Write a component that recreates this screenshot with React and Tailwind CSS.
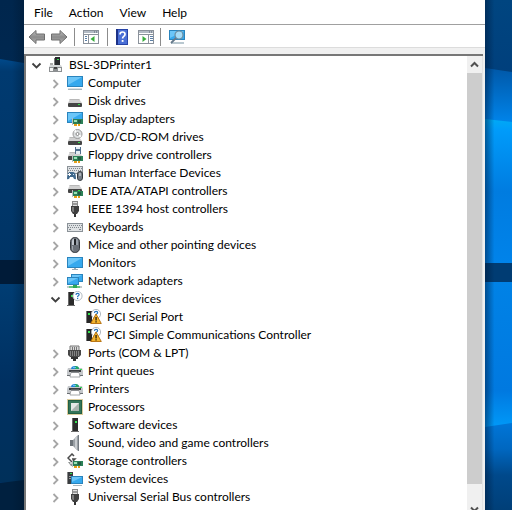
import React from "react";

const Icon = ({ children, className = "h-4 w-4" }) => (
  <svg viewBox="0 0 16 16" className={`${className} block shrink-0`} aria-hidden="true">
    {children}
  </svg>
);

const Screen = ({ x, y, w, h }) => (
  <g>
    <rect x={x} y={y} width={w} height={h} fill="#2a84bd" />
    <rect x={x + 1} y={y + 1} width={w - 2} height={h - 2} fill="#36a9ee" />
    <path d={`M${x + 1} ${y + 1}h${w - 2}L${x + 1} ${y + h - 2}z`} fill="#6cc6f8" />
  </g>
);

const Card = ({ x = 5, y = 8 }) => (
  <g>
    <rect x={x} y={y - 1} width="1" height="7" fill="#b9bdbd" />
    <rect x={x + 1} y={y} width="10" height="5" fill="#2c8058" />
    <rect x={x + 2} y={y + 1} width="3" height="2" fill="#9be0b4" />
    <rect x={x + 6} y={y + 1} width="3" height="3" fill="#235c43" />
    <rect x={x + 2} y={y + 5} width="3" height="2" fill="#e6a01a" />
    <rect x={x + 6} y={y + 5} width="2" height="2" fill="#e6a01a" />
  </g>
);

const Drive = ({ y = 6 }) => (
  <g>
    <path d={`M3 ${y}h9l3 4H1z`} fill="#d0d0d0" />
    <path d={`M3 ${y}h9l1 1H2z`} fill="#b8b8b8" />
    <rect x="1" y={y + 4} width="14" height="4" rx="1" fill="#454545" />
    <rect x="11" y={y + 5} width="2" height="1" fill="#37e34a" />
  </g>
);

const Tower = ({ x = 1 }) => (
  <g>
    <rect x={x} y="1" width="6" height="13" fill="#2b2b2b" />
    <rect x={x} y="1" width="1" height="13" fill="#686868" />
    <rect x={x + 3} y="4" width="2" height="2" fill="#35e550" />
    <rect x={x - 1} y="14" width="8" height="1" fill="#6d6d6d" />
  </g>
);

const Question = ({ cx = 10, cy = 5 }) => (
  <g>
    <circle cx={cx} cy={cy} r="4.6" fill="#fff" stroke="#a9b2ba" strokeWidth=".9" />
    <path
      d={`M${cx - 1.6} ${cy - 1.1}q.1-1.5 1.7-1.5t1.5 1.4q0 .8-1.4 1.5v.9`}
      fill="none"
      stroke="#2271bb"
      strokeWidth="1.2"
    />
    <rect x={cx - 0.5} y={cy + 2} width="1.2" height="1.1" fill="#2271bb" />
  </g>
);

const Keys = ({ y = 4, h = 9 }) => (
  <g>
    <rect x="0" y={y} width="16" height={h} fill="#8b9298" />
    <rect x="1" y={y + 1} width="14" height={h - 2} fill="#dfe2e4" />
    <path
      d={`M2 ${y + 2.5}h13M1 ${y + 4.5}h14`}
      stroke="#80878d"
      strokeWidth="1"
      strokeDasharray="1 1"
    />
    <path d={`M2 ${y + 6.5}h2M12 ${y + 6.5}h2`} stroke="#80878d" />
  </g>
);

const Plug = () => (
  <g>
    <rect x="5.5" y=".5" width="5" height="5" fill="#e0e0e0" stroke="#8a8a8a" />
    <path d="M6.5 2h1v2h-1zM8.5 2h1v2h-1z" fill="#555" />
    <path d="M4 5h8v5l-2 3H6l-2-3z" fill="#3f3f3f" />
    <path d="M5 6h2v5H6l-1-1z" fill="#7c7c7c" />
    <rect x="7" y="13" width="2" height="3" fill="#333" />
  </g>
);

const Printer = () => (
  <g>
    <path d="M4 6q0-3 4-3t4 3z" fill="#2584d8" />
    <path d="M8 3q4 0 4 3H8z" fill="#27a964" />
    <path d="M6 4h3v1H6z" fill="#69c7ee" />
    <path d="M1 5h3v1h8V5h3l1 3v5h-3V9H3v4H0V8z" fill="#c4c7ca" />
    <path d="M2 7h12v2H2z" fill="#3c3f42" />
    <path d="M0 12h3v1H0zM13 12h3v1h-3z" fill="#6a6e72" />
    <rect x="13" y="6" width="2" height="1" fill="#32df54" />
    <path d="M4 9h8l1 5H3z" fill="#fff" stroke="#8e9296" strokeWidth=".8" />
    <path d="M4 9h8v1H4z" fill="#8a8d90" />
  </g>
);

const Unknown = () => (
  <g>
    <rect x="1" y="2" width="5" height="12" fill="#262626" />
    <rect x="0" y="2" width="1" height="12" fill="#777" />
    <rect x="2" y="4" width="2" height="2" fill="#35e550" />
    <Question cx={10} cy={5} />
    <path d="M10 5 15.3 14.5H4.7z" fill="#f4b52e" stroke="#b26c08" strokeWidth=".9" strokeLinejoin="round" />
    <path d="M9.4 8h1.3v3.4H9.4zM9.4 12.2h1.3v1.3H9.4z" fill="#271b08" />
  </g>
);

const glyphs = {
  root: (
    <g>
      <path d="M7 0h5v8H7z" fill="#292b2e" />
      <path d="M6 1h1v7H6z" fill="#777" />
      <rect x="9" y="2" width="2" height="1" fill="#35e550" />
      <path d="M2 6h3v2H2z" fill="#aaa" />
      <path d="M2 8h11l1 2H1z" fill="#d4d6d7" />
      <path d="M1 10h13v5H1z" fill="#8c8f91" />
      <path d="M2 11h3v3H2zM10 11h3v3h-3z" fill="#f5f5f5" />
      <path d="M6 10h3v2H6z" fill="#444" />
    </g>
  ),
  computer: (
    <g>
      <Screen x={0} y={1} w={16} h={11} />
      <path d="M1 13h14v2H1z" fill="#a9b6bd" />
      <path d="M1 13h14v1H1z" fill="#dae2e6" />
    </g>
  ),
  disk: <Drive />,
  display: (
    <g>
      <Screen x={0} y={1} w={16} h={11} />
      <Card x={5} y={8} />
    </g>
  ),
  dvd: (
    <g>
      <Drive y={8} />
      <circle cx="10.5" cy="5" r="4.5" fill="#dcdfe0" stroke="#999" />
      <path d="M10.5 5 7 2.2l1.6-1.4zM10.5 5l4 1.8-1.4 1.8z" fill="#fff" />
      <circle cx="10.5" cy="5" r="1.5" fill="#fff" stroke="#888" />
    </g>
  ),
  floppy: (
    <g>
      <Drive y={5} />
      <path d="M8 0h6v7H8z" fill="#52708e" />
      <path d="M9 0h4v2H9zM9 4h4v3H9z" fill="#e4edf4" />
      <Card x={5} y={9} />
    </g>
  ),
  hid: (
    <g>
      <Keys y={1} h={8} />
      <path d="M0 14q0-7 3-7h3q3 0 3 7-2 1-3-2H3q-1 3-3 2z" fill="#41698c" />
      <path d="M2 8h1v3H2zM1 9h3v1H1z" fill="#fff" />
      <rect x="6" y="9" width="1" height="1" fill="#c9e4f8" />
      <rect x="10.5" y="6.5" width="5" height="9" rx="2.4" fill="#737b84" stroke="#33383d" />
      <path d="M12.5 8h1v3h-1z" fill="#e3e7ea" />
    </g>
  ),
  ide: (
    <g>
      <Drive y={2} />
      <Card x={5} y={8} />
    </g>
  ),
  plug: <Plug />,
  keyboard: <Keys />,
  mouse: (
    <g>
      <rect x="3.5" y=".5" width="9" height="15" rx="4.2" fill="#6a7078" stroke="#34383d" />
      <path d="M5 4q0-2.5 2-2.5V8H5z" fill="#c1c8d0" />
      <path d="M9 1.5q2 0 2 3V8H9z" fill="#98a0a9" />
      <rect x="7" y="2" width="2" height="6" fill="#202327" />
      <path d="M5 9h1v3q0 1.5 1 2-2 0-2-2z" fill="#a1a8af" />
    </g>
  ),
  monitor: (
    <g>
      <Screen x={0} y={2} w={16} h={11} />
      <path d="M7 13h2v1h2v1H5v-1h2z" fill="#9eabb3" />
    </g>
  ),
  network: (
    <g>
      <Screen x={4} y={1} w={12} h={8} />
      <Screen x={0} y={4} w={12} h={8} />
      <path d="M7 12h2v1h5v2H1v-2h6z" fill="#68c583" />
      <path d="M6 12h4v3H6z" fill="#2ea956" />
      <path d="M0 13h2v2H0zM13 13h2v2h-2z" fill="#c3cbcb" />
    </g>
  ),
  other: (
    <g>
      <Tower x={1} />
      <Question cx={10.5} cy={5} />
    </g>
  ),
  unknown: <Unknown />,
  port: (
    <g>
      <path d="M3 1h9v5H3z" fill="#dadada" stroke="#777" />
      <path d="M5.5 2v3M7.5 2v3M9.5 2v3" stroke="#777" />
      <path d="M1 5h13v5l-2 2H3l-2-2z" fill="#474747" />
      <path d="M3.5 6v5M5.5 6v5M7.5 6v5M9.5 6v5M11.5 6v5" stroke="#858585" />
      <path d="M4 12h2v2H4zM9 12h2v2H9zM6 12h3v4H6z" fill="#333" />
    </g>
  ),
  printer: <Printer />,
  cpu: (
    <g>
      <rect x=".5" y=".5" width="15" height="15" fill="none" stroke="#b99a3c" strokeDasharray="1 1" />
      <rect x="1" y="1" width="14" height="14" fill="#235f43" />
      <rect x="2" y="2" width="12" height="12" fill="#34755a" />
      <rect x="4" y="4" width="8" height="8" fill="#a9b4af" />
      <path d="M4 4h8l-8 8z" fill="#e4e8e6" />
    </g>
  ),
  software: <Tower x={5} />,
  sound: (
    <g>
      <path d="M3 5h3v6H3z" fill="#6d747a" />
      <path d="m6 5 5-5v16l-5-5z" fill="#9aa0a5" />
      <path d="m8 3 2-2v14l-2-2z" fill="#c8ccd0" />
      <path d="M11 0h1v16h-1z" fill="#747b82" />
    </g>
  ),
  storage: (
    <g>
      <path d="M7 3 5 1 1 5l4 4 3-3H5" fill="none" stroke="#4b4b4b" strokeWidth="1.5" />
      <path d="M1 9h8v4H4z" fill="#8e9393" />
      <path d="M3 9h4v2H3z" fill="#cfd2d2" />
      <Card x={5} y={8} />
    </g>
  ),
  system: (
    <g>
      <path d="M1 1h5v12H1z" fill="#3a3d40" />
      <path d="M0 1h1v12H0z" fill="#888" />
      <path d="M2 5h3v1H2zM2 7h3v1H2z" fill="#999" />
      <rect x="3" y="2" width="2" height="1" fill="#35e550" />
      <Screen x={4} y={5} w={12} h={8} />
      <path d="M6 14h9v1H6z" fill="#a9b6bd" />
    </g>
  ),
};

const categories = [
  ["Computer", "computer"],
  ["Disk drives", "disk"],
  ["Display adapters", "display"],
  ["DVD/CD-ROM drives", "dvd"],
  ["Floppy drive controllers", "floppy"],
  ["Human Interface Devices", "hid"],
  ["IDE ATA/ATAPI controllers", "ide"],
  ["IEEE 1394 host controllers", "plug"],
  ["Keyboards", "keyboard"],
  ["Mice and other pointing devices", "mouse"],
  ["Monitors", "monitor"],
  ["Network adapters", "network"],
  ["Other devices", "other", ["PCI Serial Port", "PCI Simple Communications Controller"]],
  ["Ports (COM & LPT)", "port"],
  ["Print queues", "printer"],
  ["Printers", "printer"],
  ["Processors", "cpu"],
  ["Software devices", "software"],
  ["Sound, video and game controllers", "sound"],
  ["Storage controllers", "storage"],
  ["System devices", "system"],
  ["Universal Serial Bus controllers", "plug"],
];

function Row({ label, icon, open, leaf }) {
  return (
    <div className="flex h-[18px] items-center whitespace-nowrap">
      {leaf ? (
        <span className="w-[22px] shrink-0" />
      ) : (
        <button
          type="button"
          aria-label={`${open ? "Collapse" : "Expand"} ${label}`}
          className="flex h-4 w-[22px] shrink-0 items-center pl-[5px]"
        >
          <svg viewBox="0 0 11 11" className="h-[11px] w-[11px]" fill="none" aria-hidden="true">
            {open ? (
              <path d="m1.5 3.5 4 4 4-4" stroke="#404040" strokeWidth="1.8" />
            ) : (
              <path d="m3.5 2 4 4-4 4" stroke="#a6a6a6" strokeWidth="1.8" />
            )}
          </svg>
        </button>
      )}
      <Icon>{glyphs[icon]}</Icon>
      <span className="pl-[5px]">{label}</span>
    </div>
  );
}

function Separator() {
  return <span className="h-[18px] w-px shrink-0 bg-[#8c8c8c]" />;
}

function Arrow({ flip }) {
  return (
    <svg viewBox="0 0 17 16" className={flip ? "h-4 w-[17px] -scale-x-100" : "h-4 w-[17px]"} aria-hidden="true">
      <defs>
        <linearGradient id={flip ? "fwd" : "back"} x1="0" y1="0" x2="0" y2="1">
          <stop offset="0" stopColor="#c2c2c2" />
          <stop offset=".5" stopColor="#8b8b8b" />
          <stop offset="1" stopColor="#b5b5b5" />
        </linearGradient>
      </defs>
      <path
        d="M1 8 8 1.5V5h8.5v6H8v3.5z"
        fill={flip ? "url(#fwd)" : "url(#back)"}
        stroke="#6e6e6e"
        strokeLinejoin="round"
      />
    </svg>
  );
}

function Pane({ right }) {
  return (
    <Icon>
      <rect x=".5" y="1.5" width="15" height="13" fill="#fff" stroke="#8b929b" />
      <path d="M1 2h14v2H1z" fill="#b3bbc5" />
      <path d="M11 2.5h1v1h-1zM13 2.5h1v1h-1z" fill="#55606e" />
      <path d="M1 5.5h14" stroke="#8b929b" />
      {right ? (
        <g>
          <path d="M10.5 6v8" stroke="#8b929b" />
          <path d="M12 7.5h3M12 9.5h3M12 11.5h3" stroke="#5b7fa6" />
          <path d="M4.5 7v6l4-3z" fill="#39ad3d" />
        </g>
      ) : (
        <g>
          <path d="M5.5 6v8" stroke="#8b929b" />
          <path d="M2 7.5h2M2 9.5h2M2 11.5h2" stroke="#5b7fa6" />
          <path d="M11.5 7v6l-4-3z" fill="#39ad3d" />
        </g>
      )}
    </Icon>
  );
}

function ToolButton({ label, children }) {
  return (
    <button type="button" aria-label={label} className="flex h-5 shrink-0 items-center">
      {children}
    </button>
  );
}

function LeftWallpaper() {
  return (
    <svg viewBox="0 0 24 510" preserveAspectRatio="none" className="block h-full w-6 shrink-0" aria-hidden="true">
      <defs>
        <linearGradient id="l1" x1="0" y1="0" x2="0" y2="1">
          <stop offset="0" stopColor="#00264d" />
          <stop offset="1" stopColor="#003263" />
        </linearGradient>
        <linearGradient id="l2" x1="0" y1="0" x2="0" y2="1">
          <stop offset="0" stopColor="#00498a" />
          <stop offset=".06" stopColor="#003a70" />
          <stop offset="1" stopColor="#003465" />
        </linearGradient>
        <linearGradient id="l3" x1="0" y1="0" x2="0" y2="1">
          <stop offset="0" stopColor="#003d73" />
          <stop offset=".5" stopColor="#003061" />
          <stop offset="1" stopColor="#00305a" />
        </linearGradient>
        <linearGradient id="lshade">
          <stop offset=".5" stopColor="#001020" stopOpacity="0" />
          <stop offset="1" stopColor="#001020" stopOpacity=".3" />
        </linearGradient>
      </defs>
      <path d="M0 0h24v510H0z" fill="url(#l1)" />
      <path d="M0 59l24 4v200H0z" fill="url(#l2)" />
      <path d="M0 260h24v24H0z" fill="#001b38" />
      <path d="M0 284h24v198H0z" fill="url(#l3)" />
      <path d="M0 483l24-3v30H0z" fill="#00203f" />
      <path d="M0 0h24v510H0z" fill="url(#lshade)" />
    </svg>
  );
}

function RightWallpaper() {
  return (
    <svg viewBox="0 0 27 510" preserveAspectRatio="none" className="block h-full w-[27px] shrink-0" aria-hidden="true">
      <defs>
        <linearGradient id="r1" x1="0" y1="0" x2="0" y2="1">
          <stop offset="0" stopColor="#004580" />
          <stop offset="1" stopColor="#003f7c" />
        </linearGradient>
        <linearGradient id="r2" x1="0" y1="0" x2="0" y2="1">
          <stop offset="0" stopColor="#0058a8" />
          <stop offset=".85" stopColor="#0084ea" />
          <stop offset="1" stopColor="#0084ea" />
        </linearGradient>
        <linearGradient id="r3" x1="0" y1="0" x2="0" y2="1">
          <stop offset="0" stopColor="#00aaf5" />
          <stop offset=".08" stopColor="#009bfa" />
          <stop offset=".5" stopColor="#007ce0" />
          <stop offset="1" stopColor="#0083ea" />
        </linearGradient>
        <linearGradient id="r4" x1="0" y1="0" x2="0" y2="1">
          <stop offset="0" stopColor="#0082e6" />
          <stop offset=".75" stopColor="#0079e0" />
          <stop offset="1" stopColor="#0099f8" />
        </linearGradient>
        <linearGradient id="r5" x1="0" y1="0" x2="0" y2="1">
          <stop offset="0" stopColor="#0076d8" />
          <stop offset=".3" stopColor="#0067c0" />
          <stop offset=".6" stopColor="#00498b" />
          <stop offset="1" stopColor="#003f78" />
        </linearGradient>
        <linearGradient id="rshade">
          <stop offset="0" stopColor="#001838" stopOpacity=".5" />
          <stop offset=".35" stopColor="#001838" stopOpacity="0" />
        </linearGradient>
      </defs>
      <path d="M0 0h27v80H0z" fill="url(#r1)" />
      <path d="M0 68l27 4v60H0z" fill="url(#r2)" />
      <path d="M0 119l27 3v142H0z" fill="url(#r3)" />
      <path d="M0 263h27v19H0z" fill="#003c73" />
      <path d="M0 282h27v145H0z" fill="url(#r4)" />
      <path d="M0 427l27-4v87H0z" fill="url(#r5)" />
      <path d="M0 0h27v510H0z" fill="url(#rshade)" />
    </svg>
  );
}

export default function App() {
  return (
    <div className="flex h-screen overflow-hidden bg-[#003a70] font-['Lato','Open_Sans',sans-serif] text-[12px] leading-[18px] text-black">
      <LeftWallpaper />
      <main className="flex min-w-0 flex-1 flex-col self-start bg-[#f0f0f0]">
        <nav aria-label="Menu" className="flex h-[25px] items-center gap-4 border-b border-[#a0a0a0] bg-white pt-[2px] pl-[10px]">
          {["File", "Action", "View", "Help"].map((item) => (
            <button key={item} type="button">
              {item}
            </button>
          ))}
        </nav>
        <div role="toolbar" aria-label="Tools" className="flex h-[23px] items-center border-b border-[#dcdcdc] bg-white pt-[2px] pl-1">
          <div className="flex items-center gap-[6px] pr-[6px]">
            <ToolButton label="Back">
              <Arrow />
            </ToolButton>
            <ToolButton label="Forward">
              <Arrow flip />
            </ToolButton>
          </div>
          <Separator />
          <div className="flex px-2">
            <ToolButton label="Show or hide console tree">
              <Pane />
            </ToolButton>
          </div>
          <Separator />
          <div className="flex gap-2 px-[6px]">
            <ToolButton label="Help topics">
              <Icon>
                <path d="M2 0h12v16H2z" fill="#2744a8" />
                <path d="M4 1h9v14H4z" fill="#4a6fd6" />
                <path d="M2 0h2v16H2z" fill="#1c3187" />
                <path d="M6 5.5q0-2.5 2.5-2.5T11 5.3q0 1.5-1.5 2.3-.9.6-.9 2" fill="none" stroke="#fff" strokeWidth="1.7" />
                <path d="M7.7 11h1.8v1.9H7.7z" fill="#fff" />
              </Icon>
            </ToolButton>
            <ToolButton label="Show or hide action pane">
              <Pane right />
            </ToolButton>
          </div>
          <Separator />
          <div className="flex px-2">
            <ToolButton label="Scan for hardware changes">
              <Icon>
                <Screen x={0} y={1} w={16} h={10} />
                <path d="M2 13h13v2H2z" fill="#b9c8d0" />
                <circle cx="10" cy="6" r="4" fill="#a6dcf7" stroke="#6b8ca0" strokeWidth="1.2" />
                <path d="m7 9-5 5" stroke="#66798a" strokeWidth="1.8" />
              </Icon>
            </ToolButton>
          </div>
        </div>
        <div className="mt-[6px] mr-[2px] flex border-t-2 border-l-2 border-[#777777] bg-white">
          <section aria-label="Devices" className="min-w-0 flex-1 overflow-hidden pb-3">
            <Row label="BSL-3DPrinter1" icon="root" open />
            <ul>
              {categories.map(([label, icon, children]) => (
                <li key={label} className="pl-[19px]">
                  <Row label={label} icon={icon} open={Boolean(children)} />
                  {children && (
                    <ul className="pl-[19px]">
                      {children.map((child) => (
                        <li key={child}>
                          <Row label={child} icon="unknown" leaf />
                        </li>
                      ))}
                    </ul>
                  )}
                </li>
              ))}
            </ul>
          </section>
          <div className="flex w-4 shrink-0 flex-col border-r border-[#e3e3e3] bg-[#f0f0f0]">
            <button type="button" aria-label="Scroll up" className="flex h-[17px] items-center justify-center">
              <svg viewBox="0 0 9 9" className="h-[9px] w-[9px]" fill="none" aria-hidden="true">
                <path d="m1 6.5 3.5-3.5L8 6.5" stroke="#505050" strokeWidth="2" />
              </svg>
            </button>
            <div className="flex-1 bg-[#cdcdcd]" />
            <div className="h-[17px]" />
            <button type="button" aria-label="Scroll down" className="flex h-[17px] items-center justify-center">
              <svg viewBox="0 0 9 9" className="h-[9px] w-[9px]" fill="none" aria-hidden="true">
                <path d="m1 2.5 3.5 3.5L8 2.5" stroke="#505050" strokeWidth="2" />
              </svg>
            </button>
          </div>
        </div>
      </main>
      <RightWallpaper />
    </div>
  );
}
